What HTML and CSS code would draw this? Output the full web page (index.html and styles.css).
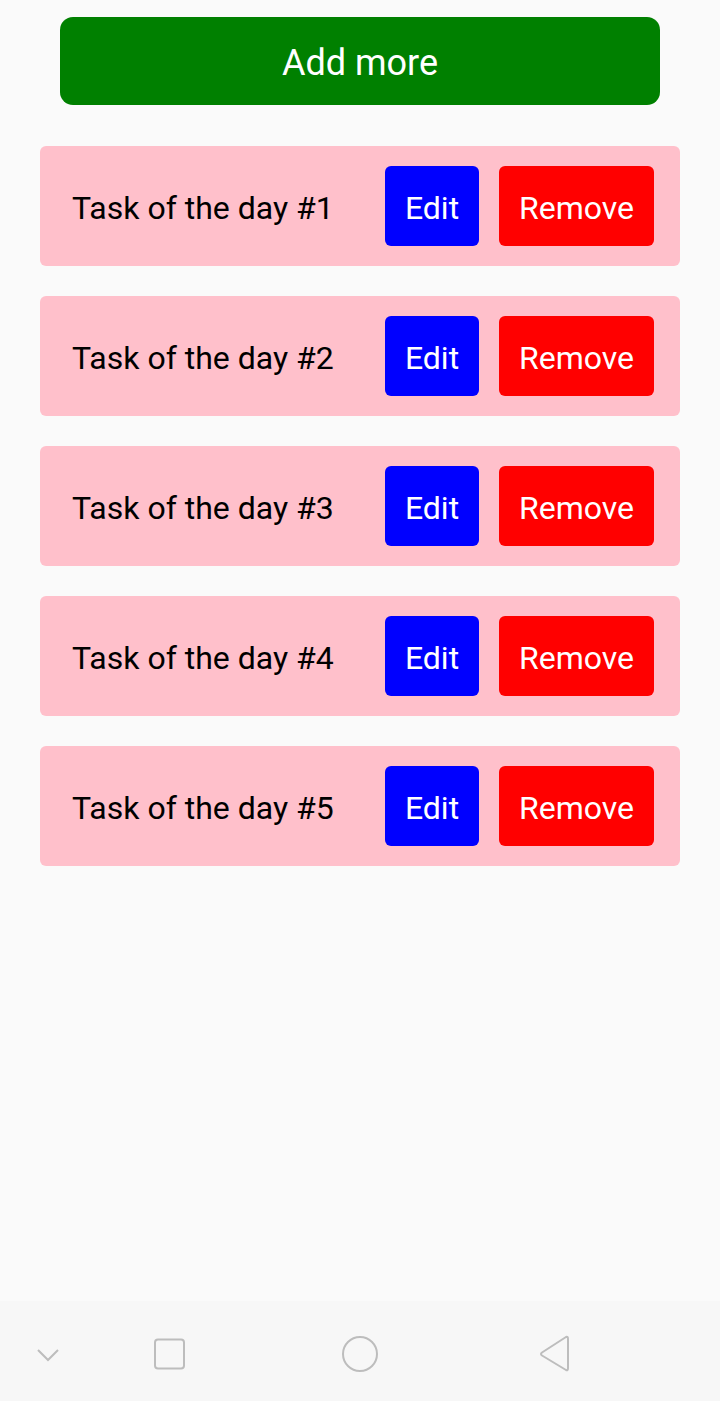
FILE: index.html
```html
<!DOCTYPE html>
<html>
<head>
<meta charset="utf-8">
<link rel="stylesheet" href="styles.css">
</head>
<body>
<div class="app">
  <main class="content">
    <button class="add">Add more</button>
    <ul class="list">
      <li class="card"><span class="title">Task of the day #1</span><button class="btn edit">Edit</button><button class="btn remove">Remove</button></li>
      <li class="card"><span class="title">Task of the day #2</span><button class="btn edit">Edit</button><button class="btn remove">Remove</button></li>
      <li class="card"><span class="title">Task of the day #3</span><button class="btn edit">Edit</button><button class="btn remove">Remove</button></li>
      <li class="card"><span class="title">Task of the day #4</span><button class="btn edit">Edit</button><button class="btn remove">Remove</button></li>
      <li class="card"><span class="title">Task of the day #5</span><button class="btn edit">Edit</button><button class="btn remove">Remove</button></li>
    </ul>
  </main>
  <nav class="navbar">
    <svg class="nav-chev" width="24" height="16" viewBox="0 0 24 16"><path d="M2 3 L12 13 L22 3" fill="none" stroke="#bdbdbd" stroke-width="2"/></svg>
    <svg class="nav-sq" width="32" height="32" viewBox="0 0 32 32"><rect x="1" y="1.5" width="29" height="29" rx="3" fill="none" stroke="#bdbdbd" stroke-width="2"/></svg>
    <svg class="nav-circle" width="38" height="38" viewBox="0 0 38 38"><circle cx="19" cy="19" r="17" fill="none" stroke="#bdbdbd" stroke-width="2"/></svg>
    <svg class="nav-back" width="34" height="38" viewBox="0 0 34 38"><path d="M29 2 Q31 1 31 4 L31 33 Q31 36 29 35 L5 20.5 Q3 19 5 17.5 Z" fill="none" stroke="#bdbdbd" stroke-width="2" stroke-linejoin="round"/></svg>
  </nav>
</div>
</body>
</html>
```
FILE: styles.css
```css
* { box-sizing: border-box; }
html, body { margin: 0; padding: 0; }
body {
  background: #fafafa;
  font-family: Roboto, "Liberation Sans", sans-serif;
}
.app {
  width: 720px;
  height: 1401px;
  display: flex;
  flex-direction: column;
}
.content {
  flex: 1;
  display: flex;
  flex-direction: column;
  align-items: center;
  padding-top: 17px;
}
.add {
  width: 600px;
  height: 88px;
  border: none;
  border-radius: 13px;
  background: #008000;
  color: #fff;
  font-family: inherit;
  font-size: 36px;
  line-height: 1;
  padding: 4px 0 0;
  margin: 0 0 41px;
}
.list {
  list-style: none;
  margin: 0;
  padding: 0;
  width: 640px;
  display: flex;
  flex-direction: column;
  gap: 30px;
}
.card {
  height: 120px;
  background: #ffc0cb;
  border-radius: 6px;
  display: flex;
  align-items: center;
  padding: 0 26px 0 32px;
}
.title {
  flex: 1;
  font-size: 32px;
  line-height: 1;
  color: #000;
  padding-top: 3px;
  white-space: nowrap;
}
.btn {
  height: 80px;
  border: none;
  border-radius: 6px;
  color: #fff;
  font-family: inherit;
  font-size: 32px;
  line-height: 1;
  padding: 4px 0 0;
  flex: none;
}
.edit {
  width: 94px;
  background: #0000ff;
}
.remove {
  width: 155px;
  background: #ff0000;
  margin-left: 20px;
}
.navbar {
  height: 100px;
  background: #f7f7f7;
  position: relative;
}
.navbar svg { position: absolute; }
.nav-chev { left: 36px; top: 46px; }
.nav-sq { left: 154px; top: 37px; }
.nav-circle { left: 341px; top: 34px; }
.nav-back { left: 537px; top: 34px; }
```
